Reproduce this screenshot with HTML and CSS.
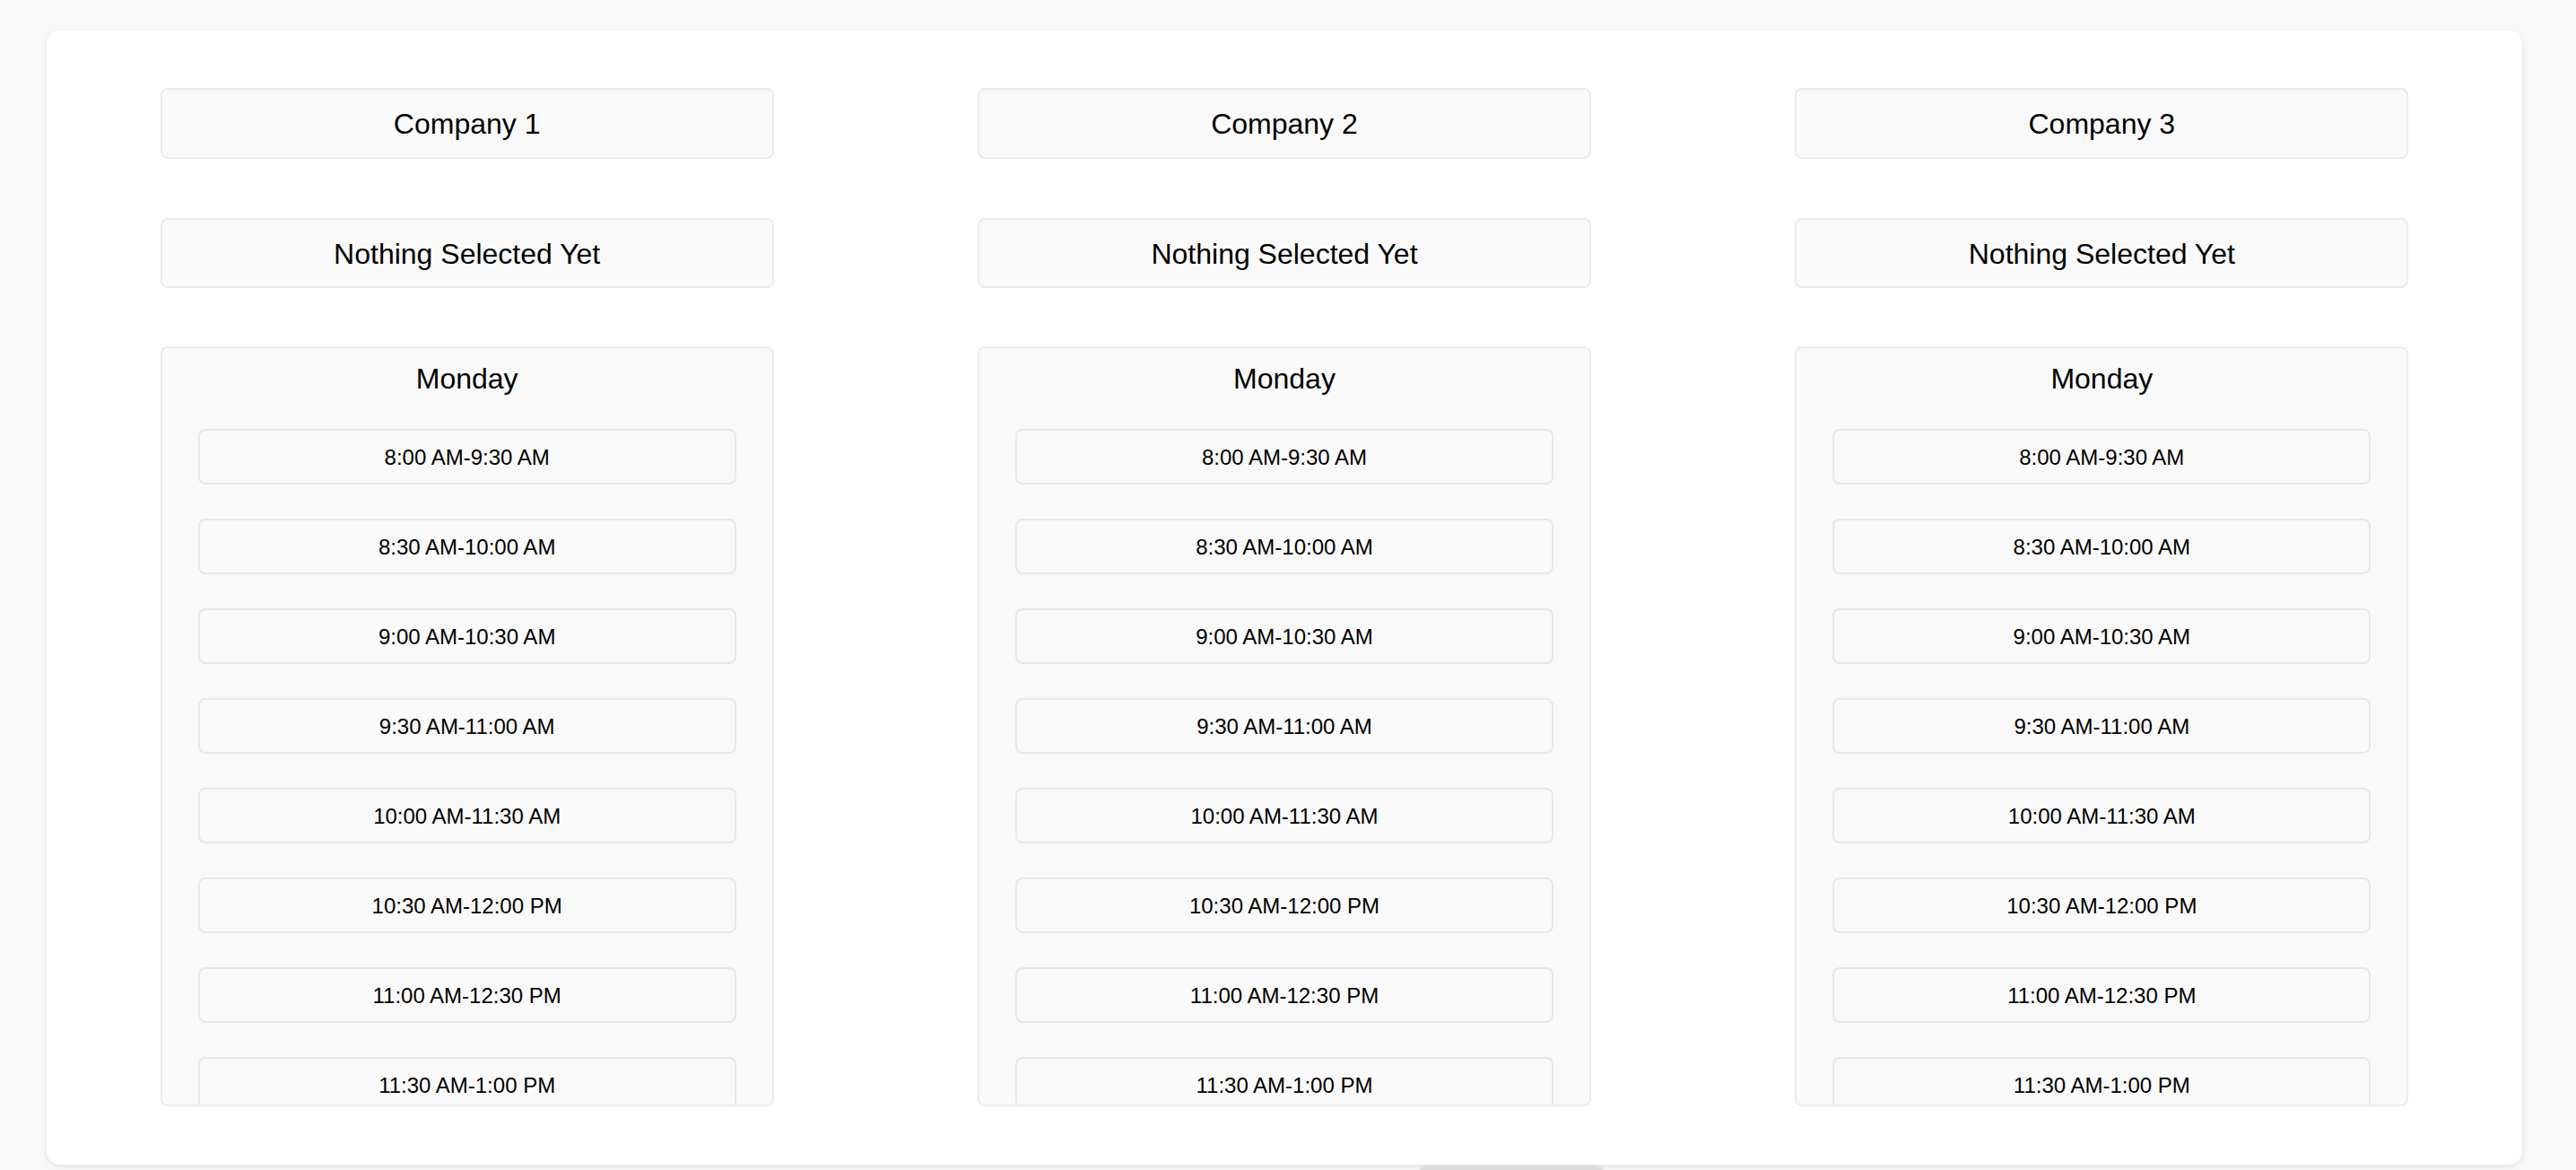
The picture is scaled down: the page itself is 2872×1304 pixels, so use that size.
FILE: index.html
```html
<!DOCTYPE html>
<html>
<head>
<meta charset="utf-8">
<link rel="stylesheet" href="styles.css">
</head>
<body>
<div class="page">
  <div class="card">
    <div class="columns">
      <div class="column">
        <div class="box company">Company 1</div>
        <div class="box selected">Nothing Selected Yet</div>
        <div class="day-panel">
          <h3 class="day-title">Monday</h3>
          <div class="slot">8:00 AM-9:30 AM</div>
          <div class="slot">8:30 AM-10:00 AM</div>
          <div class="slot">9:00 AM-10:30 AM</div>
          <div class="slot">9:30 AM-11:00 AM</div>
          <div class="slot">10:00 AM-11:30 AM</div>
          <div class="slot">10:30 AM-12:00 PM</div>
          <div class="slot">11:00 AM-12:30 PM</div>
          <div class="slot">11:30 AM-1:00 PM</div>
        </div>
      </div>
      <div class="column">
        <div class="box company">Company 2</div>
        <div class="box selected">Nothing Selected Yet</div>
        <div class="day-panel">
          <h3 class="day-title">Monday</h3>
          <div class="slot">8:00 AM-9:30 AM</div>
          <div class="slot">8:30 AM-10:00 AM</div>
          <div class="slot">9:00 AM-10:30 AM</div>
          <div class="slot">9:30 AM-11:00 AM</div>
          <div class="slot">10:00 AM-11:30 AM</div>
          <div class="slot">10:30 AM-12:00 PM</div>
          <div class="slot">11:00 AM-12:30 PM</div>
          <div class="slot">11:30 AM-1:00 PM</div>
        </div>
      </div>
      <div class="column">
        <div class="box company">Company 3</div>
        <div class="box selected">Nothing Selected Yet</div>
        <div class="day-panel">
          <h3 class="day-title">Monday</h3>
          <div class="slot">8:00 AM-9:30 AM</div>
          <div class="slot">8:30 AM-10:00 AM</div>
          <div class="slot">9:00 AM-10:30 AM</div>
          <div class="slot">9:30 AM-11:00 AM</div>
          <div class="slot">10:00 AM-11:30 AM</div>
          <div class="slot">10:30 AM-12:00 PM</div>
          <div class="slot">11:00 AM-12:30 PM</div>
          <div class="slot">11:30 AM-1:00 PM</div>
        </div>
      </div>
    </div>
  </div>
  <div class="below-button"></div>
</div>
</body>
</html>
```

FILE: styles.css
```css
html, body {
  margin: 0;
  padding: 0;
  background: #f8f8f8;
  font-family: "Liberation Sans", Arial, sans-serif;
  color: #000;
  overflow: hidden;
}

.page {
  padding: 34px 60px 0 52px;
}

.card {
  background: #ffffff;
  border-radius: 15px;
  box-shadow: 0 2px 6px rgba(0, 0, 0, 0.09);
  padding: 64px 13px 65px 13px;
}

.columns {
  display: grid;
  grid-template-columns: 1fr 1fr 1fr;
}

.column {
  display: flex;
  flex-direction: column;
  align-items: center;
}

.box {
  box-sizing: border-box;
  width: 684px;
  height: 79px;
  display: flex;
  align-items: center;
  justify-content: center;
  background: #f9f9f9;
  border: 2px solid #ebebeb;
  border-radius: 8px;
  font-size: 32px;
  padding-top: 2px;
}

.selected {
  margin-top: 66px;
  height: 78px;
}

.day-panel {
  box-sizing: border-box;
  margin-top: 65px;
  width: 684px;
  height: 847px;
  background: #f9f9f9;
  border: 2px solid #ebebeb;
  border-radius: 8px;
  padding-top: 16px;
  display: flex;
  flex-direction: column;
  align-items: center;
  gap: 38px;
  overflow: hidden;
}

.day-title {
  margin: 0;
  font-size: 32px;
  font-weight: normal;
  line-height: 36px;
  flex-shrink: 0;
}

.slot {
  box-sizing: border-box;
  flex-shrink: 0;
  width: 600px;
  height: 62px;
  display: flex;
  align-items: center;
  justify-content: center;
  background: #f9f9f9;
  border: 2px solid #e8e8e8;
  border-radius: 8px;
  font-size: 24px;
  padding-top: 2px;
}

.below-button {
  margin-top: 4px;
  margin-left: 1531px;
  width: 204px;
  height: 30px;
  background: #dcdcdc;
  border-radius: 6px;
  box-shadow: 0 -1px 4px rgba(0, 0, 0, 0.18);
}
```
